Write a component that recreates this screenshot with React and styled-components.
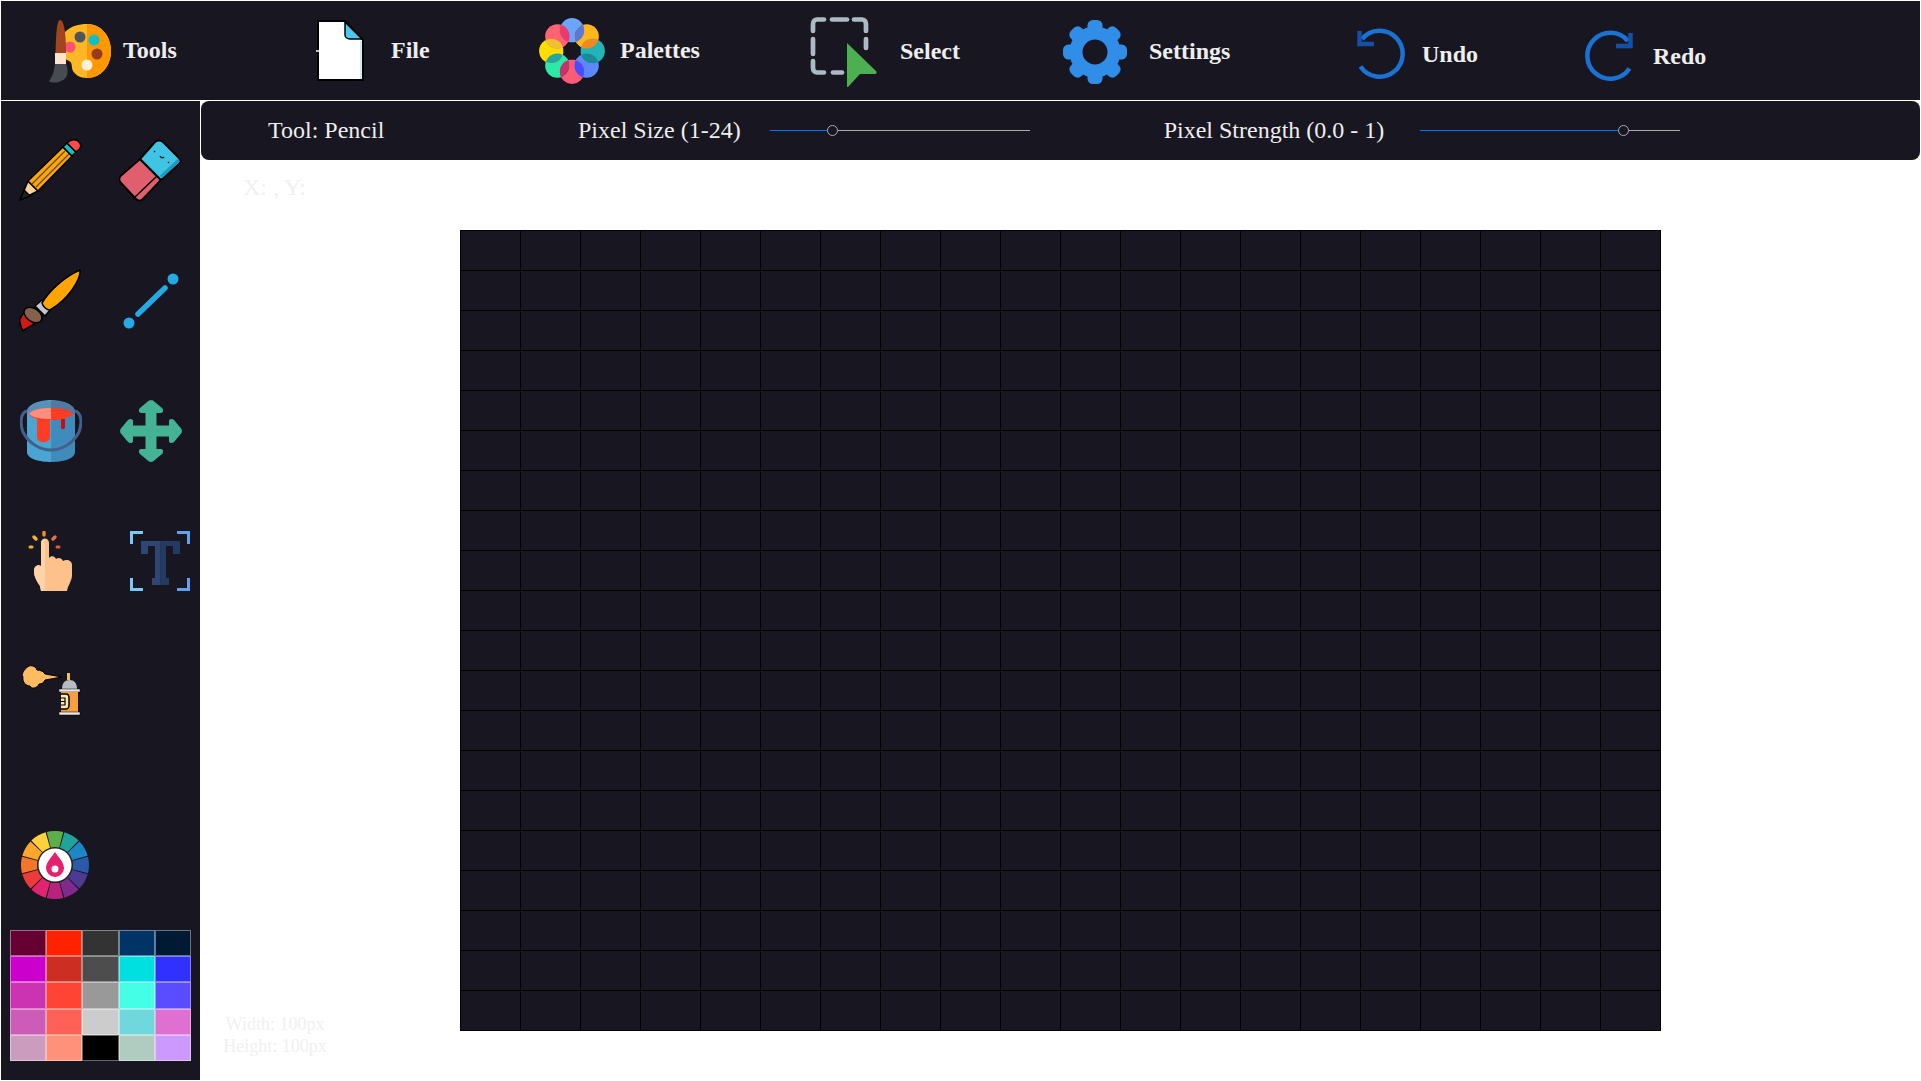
import React from 'react'
import styled, { createGlobalStyle } from 'styled-components'

const DARK = '#181620'

const GlobalStyle = createGlobalStyle`
  html, body {
    margin: 0;
    padding: 0;
    background: #fff;
    font-family: "Liberation Serif", "Times New Roman", serif;
  }
`

// Top menu icons

const ToolsIcon = () => (
  <svg width='64' height='64' viewBox='0 0 64 64'>
    <path d='M16 13 C22 7 30 5 38 5 C52 5 62 17 62 32 C62 47 52 59 38 59 C30 59 27 56 24 52 C22 48 24 44 20 42 C18 41 15 40 15 36 Z' fill='#ffb725' />
    <path d='M38 5 C52 5 62 17 62 32 C62 47 52 59 38 59 Z' fill='#ff9800' />
    <circle cx='31' cy='18' r='5.500' fill='#4f555c' />
    <circle cx='45' cy='21' r='5.500' fill='#09c0c4' />
    <circle cx='48' cy='35' r='5.500' fill='#97391c' />
    <circle cx='38' cy='46' r='5.500' fill='#fff0dc' />
    <circle cx='21' cy='28' r='5.500' fill='#ff4f72' />
    <path d='M11 1 C15 1 17 14 17 34 L6.500 34 C7 14 8 1 11 1 Z' fill='#a0461c' />
    <path d='M6 34 H17 V45 H6 Z' fill='#ffe4d0' />
    <path d='M6 45 H17 C20 52 19 60 12 62 C8 64 2 64 0 62 C3 58 5 53 6 45 Z' fill='#464c52' />
  </svg>
)

const FileIcon = () => (
  <svg width='64' height='64' viewBox='0 0 64 64'>
    <path d='M11 2 H37 L55 21 V61 H10 V3 C10 2.500 10.500 2 11 2 Z' fill='#fff' stroke='#000' strokeWidth='2' />
    <path d='M37 3 L54 20 H42 C39 20 37 18 37 16 Z' fill='#4cc9ef' stroke='#000' strokeWidth='1.500' />
    <path d='M52 22 H54 V60 H52 Z' fill='#c8edf8' />
    <path d='M8 32 H12' stroke='#fff' strokeWidth='1.500' />
  </svg>
)

const PalettesIcon = () => {
  const petals = ['#6aa5ff', '#ffb71b', '#22b5b5', '#5c88ff', '#ff5a78', '#2ee8a8', '#ffdd00', '#ff6470']
  const overlaps = ['#5a78d8', '#f08a20', '#1a8a94', '#4a4cff', '#c8306a', '#22a8a0', '#f0c030', '#e83a70']
  const center = (i) => {
    const angle = (i * 45 - 90) * Math.PI / 180

    return { cx: 33 + 20.7 * Math.cos(angle), cy: 33 + 20.7 * Math.sin(angle) }
  }

  return (
    <svg width='66' height='66' viewBox='0 0 66 66'>
      <defs>
        {petals.map((color, i) => (
          <clipPath key={color} id={`petal-${i}`}>
            <circle {...center(i)} r='12.200' />
          </clipPath>
        ))}
      </defs>
      {petals.map((color, i) => <circle key={color} {...center(i)} r='12.200' fill={color} />)}
      {overlaps.map((color, i) => (
        <circle key={color} {...center((i + 1) % 8)} r='12.200' fill={color} clipPath={`url(#petal-${i})`} />
      ))}
      <circle cx='33' cy='33' r='8.500' fill={DARK} />
    </svg>
  )
}

const SelectIcon = () => (
  <svg width='68' height='70' viewBox='0 0 68 70' fill='none'>
    <g stroke='#acbac4' strokeWidth='4.700' strokeLinecap='round'>
      <path d='M3 14 V7 C3 4 5 2.500 7 2.500 H14' />
      <path d='M22 2.500 H37' />
      <path d='M44 2.500 H52 C54 2.500 56 4 56 7 V14' />
      <path d='M3 22 V37' />
      <path d='M56 22 V31' />
      <path d='M3 44 V51 C3 54 5 55.500 7 55.500 H14' />
      <path d='M23 55.500 H32' />
    </g>
    <path d='M37 26 L66 54 C67 55 67 57 65 57 L50 57 L38 70 C37.500 70.500 37 70 37 69 Z' fill='#4caf50' />
  </svg>
)

const SettingsIcon = () => {
  const teeth = [0, 45, 90, 135, 180, 225, 270, 315]

  return (
    <svg width='64' height='64' viewBox='0 0 64 64'>
      {teeth.map((angle) => (
        <rect key={angle} x='24.500' y='0' width='15' height='16' rx='5.500' fill='#318ee8' transform={`rotate(${angle} 32 32)`} />
      ))}
      <circle cx='32' cy='32' r='19' fill='none' stroke='#318ee8' strokeWidth='13' />
    </svg>
  )
}

const UndoIcon = () => (
  <svg width='48' height='52' viewBox='0 0 48 52' fill='none'>
    <path d='M5 11 A23 23 0 1 1 3.500 38.500' stroke='#1a72d2' strokeWidth='4.500' />
    <path d='M2.500 3 V16 H17' stroke='#1450a8' strokeWidth='4.500' />
  </svg>
)

const RedoIcon = () => (
  <svg width='48' height='52' viewBox='0 0 48 52' fill='none'>
    <path d='M43 11 A23 23 0 1 0 44.500 38.500' stroke='#1a72d2' strokeWidth='4.500' />
    <path d='M45.500 3 V16 H31' stroke='#1450a8' strokeWidth='4.500' />
  </svg>
)

// Side bar tool icons

const PencilIcon = () => (
  <svg width='64' height='64' viewBox='0 0 64 64' strokeLinejoin='round'>
    <path d='M1 61 L9 42 L19 52 Z' fill='#f8d3a0' stroke='#000' strokeWidth='1.500' />
    <path d='M1 61 L5 51 L11 57 Z' fill='#222' stroke='#000' strokeWidth='1.500' />
    <path d='M9 42 L44 8 L53 17 L19 52 Z' fill='#f9a70c' stroke='#000' strokeWidth='1.500' />
    <path d='M13 45 L46 12 M17 48 L50 15' stroke='#6b4500' strokeWidth='1.200' />
    <path d='M44 8 L48 4 L57 13 L53 17 Z' fill='#10c0c8' stroke='#000' strokeWidth='1.500' />
    <path d='M48 4 C52 0 58 0 60 3 C63 6 62 10 57 13 Z' fill='#ff4a4a' stroke='#000' strokeWidth='1.500' />
  </svg>
)

const EraserIcon = () => (
  <svg width='64' height='64' viewBox='0 0 64 64' strokeLinejoin='round'>
    <path d='M1.500 37 L21 20 L42 41 L24 60 C22 62 19 62 17 60 L2 44 C0 42 0 39 1.500 37 Z' fill='#e05f6e' stroke='#000' strokeWidth='2' />
    <path d='M21 20 L36 3 C38 1 42 1 44 3 L59 18 C62 21 62 23 60 25 L42 41 Z' fill='#40c4e4' stroke='#000' strokeWidth='2' />
    <path d='M16 58 L38 37' stroke='#000' strokeWidth='1.500' fill='none' />
    <path d='M42 38 L60 21' stroke='#1a9ac0' strokeWidth='3.500' fill='none' />
    <path d='M35 12 L36 13 M41 17 C42 19 44 19 45 18 M49 23 L50 24' stroke='#123' strokeWidth='1.500' fill='none' />
  </svg>
)

const BrushIcon = () => (
  <svg width='64' height='64' viewBox='0 0 64 64' strokeLinejoin='round'>
    <path d='M1 50 C3 45 6 43 8 43 L17 53 C13 58 8 58 4 62 C2 58 0 54 1 50 Z' fill='#d01a1a' stroke='#000' strokeWidth='1.500' />
    <ellipse cx='14' cy='46' rx='10' ry='6.500' transform='rotate(35 14 46)' fill='#85604a' stroke='#000' strokeWidth='1.500' />
    <path d='M16 37 L23 31 L31 41 L26 47 Z' fill='#c0c8cc' stroke='#000' strokeWidth='1.500' />
    <path d='M23 34 C30 22 45 8 61 1 C62 10 50 30 31 41 C28 41 24 38 23 34 Z' fill='#ffa400' stroke='#000' strokeWidth='1.500' />
  </svg>
)

const LineIcon = () => (
  <svg width='56' height='56' viewBox='0 0 56 56' fill='#25a9e2'>
    <circle cx='50' cy='6' r='5.500' />
    <circle cx='6' cy='50' r='5.500' />
    <path d='M15 41 L42 15' stroke='#25a9e2' strokeWidth='5.500' strokeLinecap='round' />
  </svg>
)

const BucketIcon = () => (
  <svg width='62' height='62' viewBox='0 0 62 62' fill='none'>
    <path d='M7 12 V52 C7 59 20 62 31 62 V0 C20 0 7 4 7 12 Z' fill='#4ba5d2' />
    <path d='M55 12 V52 C55 59 42 62 31 62 V0 C42 0 55 4 55 12 Z' fill='#3f8cbc' />
    <path d='M31 1 C20 1 7 4 7 12 C7 14 8 14 9 14 L31 10 Z' fill='#5a8fb8' />
    <path d='M31 1 C42 1 55 4 55 12 C55 14 54 14 53 14 L31 10 Z' fill='#54789e' />
    <path d='M9 14 C12 9 22 8 31 8 V20 H30 V37 C30 44 17 44 17 37 V19 C13 18 10 16 9 14 Z' fill='#ff3d25' />
    <path d='M9 14 C12 9 22 8 31 8 V19 C22 19 13 18 9 14 Z' fill='#ff8f7c' />
    <path d='M31 8 C40 8 50 9 53 14 C50 18 40 20 31 20 Z' fill='#ff3d25' />
    <path d='M41 19 H45 V27 C45 30 41 30 41 27 Z' fill='#d00a0a' />
    <path d='M7 11 C0 13 0 24 3 32 C9 44 21 50 31 50 C41 50 53 44 59 32 C62 24 62 13 55 11' stroke='#445f8a' strokeWidth='3' />
  </svg>
)

const MoveIcon = () => (
  <svg width='62' height='62' viewBox='0 0 62 62' fill='#44b295'>
    <path d='M25.500 8 H36.500 V25.500 H54 V36.500 H36.500 V54 H25.500 V36.500 H8 V25.500 H25.500 Z' />
    <path d='M20 8 L29 0.500 C30 0 32 0 33 0.500 L42 8 C44 10 43 13 41 13 H21 C19 13 18 10 20 8 Z' />
    <path d='M20 54 L29 61.500 C30 62 32 62 33 61.500 L42 54 C44 52 43 49 41 49 H21 C19 49 18 52 20 54 Z' />
    <path d='M8 20 L0.500 29 C0 30 0 32 0.500 33 L8 42 C10 44 13 43 13 41 V21 C13 19 10 18 8 20 Z' />
    <path d='M54 20 L61.500 29 C62 30 62 32 61.500 33 L54 42 C52 44 49 43 49 41 V21 C49 19 52 18 54 20 Z' />
  </svg>
)

const PointerIcon = () => (
  <svg width='46' height='60' viewBox='0 0 46 60'>
    <path d='M13 60 L12 55 C9 50 6 46 6 40 C6 35 10 33 13 35 L13 12 C13 6 21 6 21 12 L21 27 C23 24 27 25 28 28 C30 26 34 27 35 30 C38 28 44 29 44 34 V44 C44 50 40 54 39 60 Z' fill='#fdc28c' />
    <path d='M13 60 L12 55 C9 50 6 46 6 40 C6 35 10 33 13 35 L13 12 C13 9 15 8 17 8 V60 Z' fill='#ffd3a8' />
    <path d='M16 1.500 V4' stroke='#f08a30' strokeWidth='3.500' strokeLinecap='round' />
    <path d='M6 6 L8 8' stroke='#f6b030' strokeWidth='3.500' strokeLinecap='round' />
    <path d='M27 6 L25 8' stroke='#f0703c' strokeWidth='3.500' strokeLinecap='round' />
    <path d='M2 16 H4' stroke='#f6b030' strokeWidth='3' strokeLinecap='round' />
    <path d='M29 16 H31' stroke='#ee5a30' strokeWidth='3' strokeLinecap='round' />
  </svg>
)

const TextIcon = () => (
  <svg width='60' height='60' viewBox='0 0 60 60' fill='none'>
    <path d='M1.500 13 V1.500 H13' stroke='#7cc8f8' strokeWidth='3' />
    <path d='M47 1.500 H58.500 V13' stroke='#64a0f0' strokeWidth='3' />
    <path d='M1.500 47 V58.500 H13' stroke='#7cc8f8' strokeWidth='3' />
    <path d='M47 58.500 H58.500 V47' stroke='#64a0f0' strokeWidth='3' />
    <path d='M11 10 H30.500 V54 H22 V47 H25 V15 H18 V23 H11 Z' fill='#2f4672' />
    <path d='M30.500 10 H50 V23 H43 V15 H36 V47 H39 V54 H30.500 Z' fill='#243a62' />
  </svg>
)

const SprayIcon = () => (
  <svg width='60' height='52' viewBox='0 0 60 52'>
    <path d='M8 1 C12 0 15 2 16 5 C20 5 23 7 24 9 L41 12 L24 15 C23 18 20 19 18 19 C16 24 10 24 9 21 C5 21 1 17 2 12 C0 9 3 4 8 1 Z' fill='#ffbb60' stroke='#000' strokeWidth='1' />
    <path d='M46 8 H49 V15 H46 Z' fill='#f0c060' />
    <path d='M41 24 C41 18 44 15 48.500 15 C53 15 56 18 56 24 Z' fill='#b8bcc0' />
    <path d='M38 24 H59 V27 H38 Z' fill='#e8e8e8' stroke='#000' strokeWidth='0.500' />
    <path d='M40 27 H57 V47 H40 Z' fill='#f4a040' />
    <path d='M38 47 H59 V50 H38 Z' fill='#e8e8e8' stroke='#000' strokeWidth='0.500' />
    <path d='M40 29 H45 C48 29 48 31 48 33 V40 C48 43 46 44 45 44 H40' fill='#ffe8b0' stroke='#000' strokeWidth='1.500' />
    <path d='M40 33 H44 V40 H40 M40 36.500 H44' fill='none' stroke='#000' strokeWidth='1.200' />
  </svg>
)

const ColorWheelIcon = () => {
  const wheel = ['#5cae4a', '#1fa39a', '#1c86c8', '#2b5aa8', '#4e3a92', '#7f2a8c', '#b8227f', '#e0246f', '#ee3a3a', '#f5762a', '#ffa62b', '#ffd23c']
  const step = 360 / wheel.length
  const wedge = (i) => {
    const a0 = ((i - 0.5) * step - 90 + 1) * Math.PI / 180
    const a1 = ((i + 0.5) * step - 90 - 1) * Math.PI / 180
    const p = (a, r) => `${34 + r * Math.cos(a)} ${34 + r * Math.sin(a)}`

    return `M${p(a0, 34)} A34 34 0 0 1 ${p(a1, 34)} L${p(a1, 18)} A18 18 0 0 0 ${p(a0, 18)} Z`
  }

  return (
    <svg width='68' height='68' viewBox='0 0 68 68'>
      <circle cx='34' cy='34' r='19' fill='#222' />
      {wheel.map((color, i) => <path key={color} d={wedge(i)} fill={color} />)}
      <circle cx='34' cy='34' r='16.500' fill='#fff' />
      <path d='M34 21 C39 28 43 32 43 37 A9 9 0 0 1 25 37 C25 32 29 28 34 21 Z' fill='#e5206e' />
      <circle cx='34' cy='38' r='3.500' fill='#fff' />
    </svg>
  )
}

const MENU = [
  { label: 'Tools', Icon: ToolsIcon, width: 259, top: 0, gap: 10, iconBox: 64 },
  { label: 'File', Icon: FileIcon, width: 231, top: 0, gap: 19, iconBox: 64 },
  { label: 'Palettes', Icon: PalettesIcon, width: 271, top: 0, gap: 15, iconBox: 66 },
  { label: 'Select', Icon: SelectIcon, width: 253, top: 2, gap: 22, iconBox: 68 },
  { label: 'Settings', Icon: SettingsIcon, width: 294, top: 2, gap: 22, iconBox: 64 },
  { label: 'Undo', Icon: UndoIcon, width: 228, top: 7, gap: 17, iconBox: 48 },
  { label: 'Redo', Icon: RedoIcon, width: 200, top: 11, gap: 20, iconBox: 48 }
]

const TOOLS = [
  [PencilIcon, EraserIcon],
  [BrushIcon, LineIcon],
  [BucketIcon, MoveIcon],
  [PointerIcon, TextIcon],
  [SprayIcon, null]
]

const SWATCHES = [
  '#660033', '#ff2200', '#333333', '#003366', '#001a33',
  '#cc00cc', '#cc2e22', '#4d4d4d', '#00dfdf', '#3030ff',
  '#cc33b3', '#ff4433', '#999999', '#44ffe6', '#5a4dff',
  '#cc5cb8', '#ff6157', '#cccccc', '#70d8dc', '#e070d0',
  '#cc9cbf', '#ff917a', '#000000', '#b0ccc0', '#cc99ff'
]

const SLIDERS = [
  { label: 'Pixel Size (1-24)', percent: 24, labelGap: 29, trailing: 134 },
  { label: 'Pixel Strength (0.0 - 1)', percent: 78, labelGap: 36, trailing: 0 }
]

const App = () => (
  <>
    <GlobalStyle />
    <Page>
      <TopBar>
        {MENU.map(({ label, Icon, width, top, gap, iconBox }) => (
          <MenuItem key={label} $width={width} $top={top} $gap={gap}>
            <MenuIcon $box={iconBox}><Icon /></MenuIcon>
            <MenuLabel>{label}</MenuLabel>
          </MenuItem>
        ))}
      </TopBar>

      <Body>
        <SideBar>
          <ToolGrid>
            {TOOLS.map((row, rowIndex) => (
              <ToolRow key={rowIndex}>
                {row.map((Icon, i) => (
                  <ToolButton key={i} $inset={Icon === TextIcon ? 18 : 0}>{Icon && <Icon />}</ToolButton>
                ))}
              </ToolRow>
            ))}
          </ToolGrid>

          <WheelButton><ColorWheelIcon /></WheelButton>

          <Swatches>
            {SWATCHES.map((color, i) => <Swatch key={i} $color={color} />)}
          </Swatches>
        </SideBar>

        <Main>
          <OptionsBar>
            <ToolName>Tool: Pencil</ToolName>
            {SLIDERS.map(({ label, percent, labelGap, trailing }) => (
              <SliderGroup key={label} $gap={labelGap} $trailing={trailing}>
                <OptionLabel>{label}</OptionLabel>
                <Slider>
                  <SliderFill style={{ width: `${percent}%` }} />
                  <SliderRest />
                  <SliderThumb style={{ left: `${percent}%` }} />
                </Slider>
              </SliderGroup>
            ))}
          </OptionsBar>

          <Workspace>
            <InfoColumn>
              <Coords>X: , Y:</Coords>
              <Dimensions>
                <div>Width: 100px</div>
                <div>Height: 100px</div>
              </Dimensions>
            </InfoColumn>

            <Canvas>
              {Array.from({ length: 400 }, (_, i) => <Cell key={i} />)}
            </Canvas>
          </Workspace>
        </Main>
      </Body>
    </Page>
  </>
)

export default App

const Page = styled.div`
  width: 1921px;
  height: 1081px;
  box-sizing: border-box;
  padding: 1px;
  display: flex;
  flex-direction: column;
  background: #fff;
  overflow: hidden;
`

const TopBar = styled.div`
  flex: 0 0 99px;
  display: flex;
  padding-left: 48px;
  background: ${DARK};
`

const MenuItem = styled.div`
  flex: 0 0 ${(props) => props.$width}px;
  display: flex;
  align-items: center;
  gap: ${(props) => props.$gap}px;
  padding-top: ${(props) => props.$top}px;
`

const MenuIcon = styled.div`
  flex: 0 0 ${(props) => props.$box}px;
  display: flex;
  align-items: center;
  justify-content: center;
`

const MenuLabel = styled.span`
  color: #eee;
  font-size: 24px;
  font-weight: bold;
`

const Body = styled.div`
  flex: 1;
  display: flex;
  margin-top: 1px;
  min-height: 0;
`

const SideBar = styled.div`
  flex: 0 0 199px;
  min-width: 0;
  margin-right: 1px;
  display: flex;
  flex-direction: column;
  background: ${DARK};
`

const ToolGrid = styled.div`
  display: flex;
  flex-direction: column;
  padding-top: 38px;
  gap: 66px;
`

const ToolRow = styled.div`
  display: grid;
  grid-template-columns: 100px 99px;
  height: 64px;
`

const ToolButton = styled.div`
  display: flex;
  align-items: center;
  justify-content: center;
  padding-left: ${(props) => props.$inset}px;
`

const WheelButton = styled.div`
  margin-top: 108px;
  padding-left: 20px;
  height: 68px;
`

const Swatches = styled.div`
  margin: 31px 0 0 9px;
  width: 181px;
  height: 131px;
  display: grid;
  grid-template-columns: repeat(5, 1fr);
  grid-template-rows: repeat(5, 1fr);
`

const Swatch = styled.div`
  box-sizing: border-box;
  background: ${(props) => props.$color};
  border: 1px solid rgba(255, 255, 255, 0.4);
`

const Main = styled.div`
  flex: 1;
  display: flex;
  flex-direction: column;
  min-width: 0;
`

const OptionsBar = styled.div`
  flex: 0 0 59px;
  display: flex;
  align-items: center;
  padding-left: 67px;
  background: ${DARK};
  border-radius: 8px;
  color: #eee;
  font-size: 24px;
`

const ToolName = styled.div`
  width: 310px;
`

const OptionLabel = styled.div`
  white-space: nowrap;
`

const SliderGroup = styled.div`
  display: flex;
  align-items: center;
  gap: ${(props) => props.$gap}px;
  margin-right: ${(props) => props.$trailing}px;
`

const Slider = styled.div`
  position: relative;
  width: 260px;
  height: 11px;
  display: flex;
  align-items: center;
`

const SliderFill = styled.div`
  height: 1px;
  background: #0075ff;
`

const SliderRest = styled.div`
  flex: 1;
  height: 1px;
  background: #aaa;
`

const SliderThumb = styled.div`
  position: absolute;
  top: 0;
  width: 11px;
  height: 11px;
  box-sizing: border-box;
  margin-left: -5px;
  border: 1px solid #aaa;
  border-radius: 50%;
  background: ${DARK};
`

const Workspace = styled.div`
  flex: 1;
  display: flex;
  min-height: 0;
`

const InfoColumn = styled.div`
  flex: 0 0 259px;
  height: 920px;
  display: flex;
  flex-direction: column;
  justify-content: space-between;
  color: #f0f0f0;
`

const Coords = styled.div`
  padding: 13px 0 0 42px;
  font-size: 24px;
  line-height: 28px;
`

const Dimensions = styled.div`
  padding-bottom: 23px;
  width: 128px;
  margin-left: 10px;
  text-align: center;
  font-size: 18px;
  line-height: 22px;
`

const Canvas = styled.div`
  margin-top: 70px;
  align-self: flex-start;
  display: grid;
  grid-template-columns: repeat(20, 60px);
  grid-auto-rows: 40px;
  border-top: 1px solid #000;
  border-left: 1px solid #000;
`

const Cell = styled.div`
  box-sizing: border-box;
  background: ${DARK};
  border-right: 1px solid #000;
  border-bottom: 1px solid #000;
`
